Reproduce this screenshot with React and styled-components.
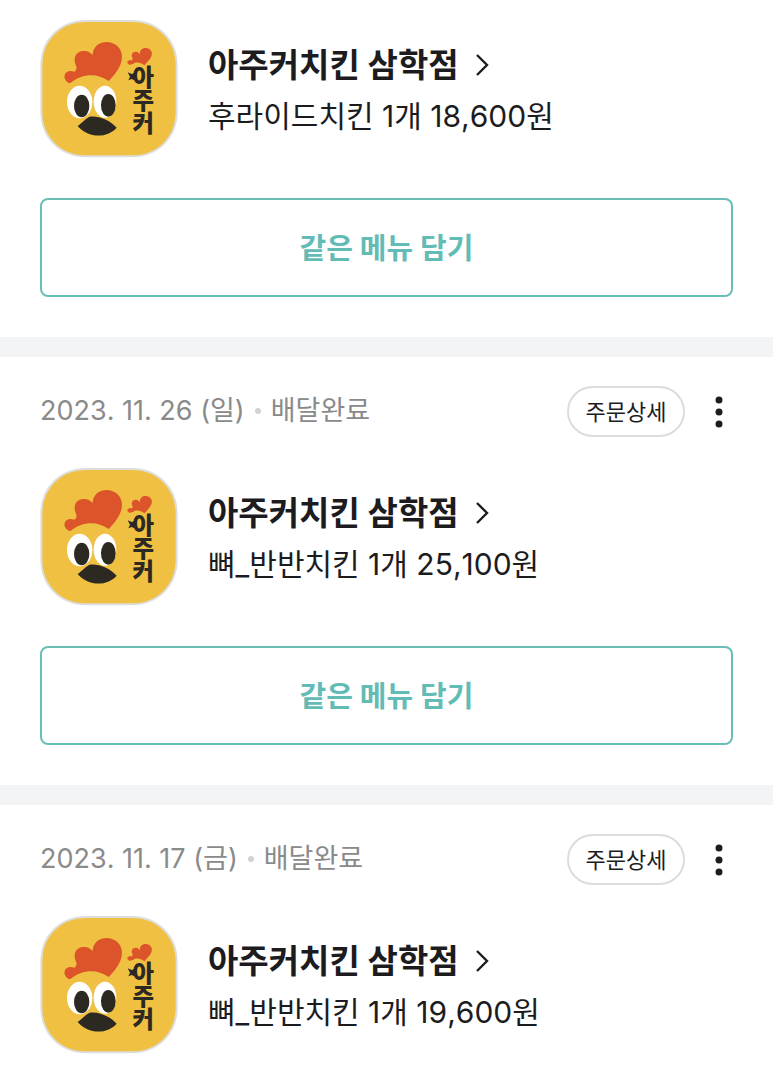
import styled, { createGlobalStyle } from "styled-components";

const orders = [
  {
    id: 1,
    store: "아주커치킨 삼학점",
    menu: "후라이드치킨 1개 18,600원",
    reorder: true,
  },
  {
    id: 2,
    date: "2023. 11. 26 (일)",
    status: "배달완료",
    store: "아주커치킨 삼학점",
    menu: "뼈_반반치킨 1개 25,100원",
    reorder: true,
  },
  {
    id: 3,
    date: "2023. 11. 17 (금)",
    status: "배달완료",
    store: "아주커치킨 삼학점",
    menu: "뼈_반반치킨 1개 19,600원",
    reorder: false,
  },
];

export default function App() {
  return (
    <>
      <GlobalStyle />
      <OrderList>
        {orders.map((order) => (
          <OrderCard key={order.id} order={order} />
        ))}
      </OrderList>
    </>
  );
}

function OrderCard({ order }) {
  const { date, status, store, menu, reorder } = order;

  return (
    <Card $compact={!date}>
      {date && (
        <CardHeader>
          <OrderMeta>
            <span>{date}</span>
            <Dot />
            <span>{status}</span>
          </OrderMeta>
          <DetailButton type="button">주문상세</DetailButton>
          <MoreButton type="button" aria-label="더보기">
            <svg width="8" height="32" viewBox="0 0 8 32" fill="#1c1c1e">
              <circle cx="4" cy="4" r="3.5" />
              <circle cx="4" cy="16" r="3.5" />
              <circle cx="4" cy="28" r="3.5" />
            </svg>
          </MoreButton>
        </CardHeader>
      )}
      <StoreRow>
        <StoreLogo />
        <StoreInfo>
          <StoreLink href="#store">
            {store}
            <svg width="14" height="24" viewBox="0 0 14 24" fill="none">
              <path d="M2 2l10 10L2 22" stroke="#1c1c1e" strokeWidth="2.4" />
            </svg>
          </StoreLink>
          <MenuText>{menu}</MenuText>
        </StoreInfo>
      </StoreRow>
      {reorder && <ReorderButton type="button">같은 메뉴 담기</ReorderButton>}
    </Card>
  );
}

function StoreLogo() {
  return (
    <LogoSvg viewBox="30 30 414 414" aria-hidden="true">
      <path
        d="M170 33H304C384 33 440 90 440 168V304C440 382 384 439 304 439H170C90 439 34 382 34 304V168C34 90 90 33 170 33Z"
        fill="#efc042"
        stroke="#dddddb"
        strokeWidth="6"
      />
      <path
        d="M120 220C107 216 101 204 104 195C108 184 118 180 133 185C140 180 142 174 137 165C128 143 139 123 160 123C172 122 181 127 188 135C188 112 207 96 229 96C257 96 276 116 276 140C276 170 251 198 236 213C202 189 157 189 120 220Z"
        fill="#dc5429"
      />
      <ellipse cx="149" cy="276" rx="38" ry="49" fill="#fff" />
      <ellipse cx="225" cy="275" rx="34" ry="48" fill="#fff" />
      <ellipse cx="155" cy="288" rx="23" ry="34" fill="#2b2922" />
      <ellipse cx="235" cy="286" rx="22" ry="34" fill="#2b2922" />
      <path
        d="M143 348C158 337 167 325 179 320C207 317 239 330 260 353C229 387 174 384 143 348Z"
        fill="#2b2922"
      />
      <path
        d="M298 164C290 161 290 151 300 151C307 151 310 149 307 143C301 132 311 122 321 126C326 128 329 132 330 134C328 119 338 112 350 114C363 116 369 128 364 139C360 150 350 157 344 166C333 158 319 154 309 162Z"
        fill="#dc5429"
      />
      <path d="M293 187L305 192L313 189V211L305 207L295 211L300 200Z" fill="#2b2922" />
      <LogoText x="340" y="165">아주커</LogoText>
    </LogoSvg>
  );
}

const GlobalStyle = createGlobalStyle`
  * {
    box-sizing: border-box;
  }
  body {
    margin: 0;
    background-color: #fff;
    color: #1c1c1e;
    font-family: Inter, "Noto Sans CJK KR", sans-serif;
    font-kerning: none;
  }
  button {
    padding: 0 0 4px;
    font-family: inherit;
    cursor: pointer;
  }
`;
const OrderList = styled.main`
  display: flex;
  flex-direction: column;
`;
const Card = styled.section`
  padding: ${({ $compact }) => ($compact ? "20px" : "29px")} 40px 40px;

  & + & {
    border-top: 20px solid #f3f4f6;
  }
`;
const CardHeader = styled.header`
  display: flex;
  align-items: center;
  margin-bottom: 31px;
`;
const OrderMeta = styled.div`
  flex: 1;
  display: flex;
  align-items: center;
  gap: 10px;
  padding-bottom: 2px;
  color: #8a8a8a;
  font-size: 27px;
  line-height: 40px;
`;
const Dot = styled.i`
  width: 6px;
  height: 6px;
  border-radius: 50%;
  background-color: #d2d2d2;
`;
const DetailButton = styled.button`
  width: 118px;
  height: 51px;
  border: 2px solid #dcdcdc;
  border-radius: 26px;
  background-color: #fff;
  color: #1c1c1e;
  font-size: 22px;
`;
const MoreButton = styled.button`
  display: grid;
  place-content: center;
  width: 28px;
  height: 50px;
  margin-left: 20px;
  padding: 0;
  border: none;
  background: none;
`;
const StoreRow = styled.div`
  display: flex;
  align-items: center;
  gap: 30px;
`;
const LogoSvg = styled.svg`
  flex: none;
  width: 138px;
  height: 138px;
`;
const LogoText = styled.text`
  fill: #2b2922;
  font-family: "Noto Sans CJK KR", sans-serif;
  font-size: 70px;
  font-weight: 900;
  writing-mode: vertical-rl;
`;
const StoreInfo = styled.div`
  display: flex;
  flex-direction: column;
  padding-top: 2px;
`;
const StoreLink = styled.a`
  display: flex;
  align-items: center;
  gap: 16px;
  color: inherit;
  font-size: 33px;
  font-weight: 700;
  line-height: 52px;
  text-decoration: none;
`;
const MenuText = styled.p`
  margin: 0;
  font-size: 30px;
  line-height: 50px;
`;
const ReorderButton = styled.button`
  display: block;
  width: 100%;
  height: 99px;
  margin-top: 40px;
  border: 2px solid #6bbdb8;
  border-radius: 8px;
  background-color: #fff;
  color: #62bbb5;
  font-size: 29px;
  font-weight: 700;
`;
